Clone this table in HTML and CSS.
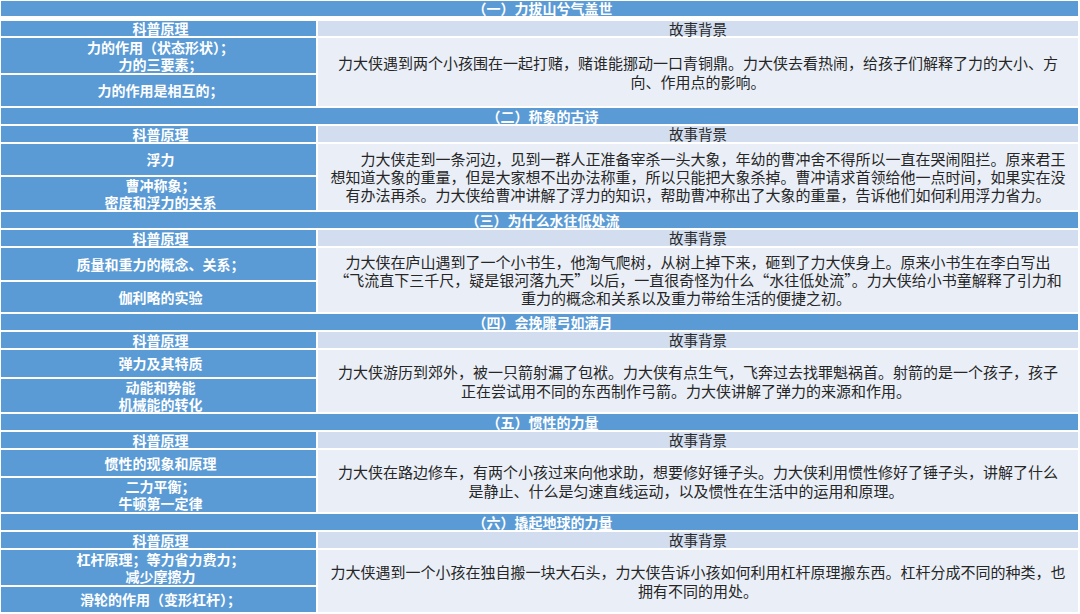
FILE: index.html
```html
<!DOCTYPE html>
<html lang="zh-CN">
<head>
<meta charset="utf-8">
<title>力大侠科普故事</title>
<link rel="stylesheet" href="styles.css">
</head>
<body>
<div class="table">
  <section class="sec s1">
    <div class="title">（一）力拔山兮气盖世</div>
    <div class="hl">科普原理</div>
    <div class="hr">故事背景</div>
    <div class="lc r1">力的作用（状态形状）；<br>力的三要素；</div>
    <div class="lc r2">力的作用是相互的；</div>
    <div class="story">
      <p>力大侠遇到两个小孩围在一起打赌，赌谁能挪动一口青铜鼎。力大侠去看热闹，给孩子们解释了力的大小、方</p>
      <p>向、作用点的影响。</p>
    </div>
  </section>
  <section class="sec s2">
    <div class="title">（二）称象的古诗</div>
    <div class="hl">科普原理</div>
    <div class="hr">故事背景</div>
    <div class="lc r1">浮力</div>
    <div class="lc r2">曹冲称象；<br>密度和浮力的关系</div>
    <div class="story tight">
      <p>　　力大侠走到一条河边，见到一群人正准备宰杀一头大象，年幼的曹冲舍不得所以一直在哭闹阻拦。原来君王</p>
      <p>想知道大象的重量，但是大家想不出办法称重，所以只能把大象杀掉。曹冲请求首领给他一点时间，如果实在没</p>
      <p>有办法再杀。力大侠给曹冲讲解了浮力的知识，帮助曹冲称出了大象的重量，告诉他们如何利用浮力省力。</p>
    </div>
  </section>
  <section class="sec s3">
    <div class="title">（三）为什么水往低处流</div>
    <div class="hl">科普原理</div>
    <div class="hr">故事背景</div>
    <div class="lc r1">质量和重力的概念、关系；</div>
    <div class="lc r2">伽利略的实验</div>
    <div class="story tight">
      <p>力大侠在庐山遇到了一个小书生，他淘气爬树，从树上掉下来，砸到了力大侠身上。原来小书生在李白写出</p>
      <p><span class="q">“</span>飞流直下三千尺，疑是银河落九天<span class="q">”</span>以后，一直很奇怪为什么<span class="q">“</span>水往低处流<span class="q">”</span>。力大侠给小书童解释了引力和</p>
      <p class="shift">重力的概念和关系以及重力带给生活的便捷之初。</p>
    </div>
  </section>
  <section class="sec s4">
    <div class="title">（四）会挽雕弓如满月</div>
    <div class="hl">科普原理</div>
    <div class="hr">故事背景</div>
    <div class="lc r1">弹力及其特质</div>
    <div class="lc r2">动能和势能<br>机械能的转化</div>
    <div class="story">
      <p>力大侠游历到郊外，被一只箭射漏了包袱。力大侠有点生气，飞奔过去找罪魁祸首。射箭的是一个孩子，孩子</p>
      <p class="shift">正在尝试用不同的东西制作弓箭。力大侠讲解了弹力的来源和作用。</p>
    </div>
  </section>
  <section class="sec s5">
    <div class="title">（五）惯性的力量</div>
    <div class="hl">科普原理</div>
    <div class="hr">故事背景</div>
    <div class="lc r1">惯性的现象和原理</div>
    <div class="lc r2">二力平衡；<br>牛顿第一定律</div>
    <div class="story">
      <p>力大侠在路边修车，有两个小孩过来向他求助，想要修好锤子头。力大侠利用惯性修好了锤子头，讲解了什么</p>
      <p class="shift">是静止、什么是匀速直线运动，以及惯性在生活中的运用和原理。</p>
    </div>
  </section>
  <section class="sec s6">
    <div class="title">（六）撬起地球的力量</div>
    <div class="hl">科普原理</div>
    <div class="hr">故事背景</div>
    <div class="lc r1">杠杆原理；等力省力费力；<br>减少摩擦力</div>
    <div class="lc r2">滑轮的作用（变形杠杆）；</div>
    <div class="story">
      <p>力大侠遇到一个小孩在独自搬一块大石头，力大侠告诉小孩如何利用杠杆原理搬东西。杠杆分成不同的种类，也</p>
      <p>拥有不同的用处。</p>
    </div>
  </section>
</div>
</body>
</html>
```

FILE: styles.css
```css
html, body {
  margin: 0;
  padding: 0;
  background: #ffffff;
}

body {
  font-family: "Noto Sans CJK SC", "Noto Sans", sans-serif;
  width: 1080px;
  height: 614px;
  overflow: hidden;
}

.table {
  display: flex;
  flex-direction: column;
  gap: 2px;
  padding: 1px 0 0 1px;
  width: 1077px;
}

.sec {
  display: grid;
  grid-template-columns: 315px 760px;
  column-gap: 2px;
  row-gap: 2px;
}

.s1 { grid-template-rows: 18px 15px 35px 31px; }
.s2 { grid-template-rows: 16px 16px 31px 33px; }
.s3 { grid-template-rows: 16px 16px 32px 30px; }
.s4 { grid-template-rows: 16px 16px 27px 33px; }
.s5 { grid-template-rows: 16px 16px 26px 34px; }
.s6 { grid-template-rows: 16px 16px 35px 25px; }

.title {
  grid-column: 1 / -1;
  grid-row: 1;
  background: #5b9bd5;
  color: #ffffff;
  font-weight: 700;
  font-size: 14px;
  line-height: 16px;
  text-align: center;
  white-space: nowrap;
  padding-left: 6px;
}

.s1 .title {
  margin-bottom: 3px;
  line-height: 15px;
}

.hl, .lc {
  grid-column: 1;
  background: #5b9bd5;
  color: #ffffff;
  font-weight: 700;
  font-size: 14px;
  text-align: center;
  white-space: nowrap;
  padding-left: 4px;
}

.hl {
  grid-row: 2;
  line-height: 16px;
}

.s1 .hl, .s1 .hr {
  line-height: 15px;
}

.hr {
  grid-column: 2;
  grid-row: 2;
  background: #d2deef;
  color: #2a2a2a;
  font-size: 14.5px;
  line-height: 16px;
  text-align: center;
  white-space: nowrap;
}

.lc {
  display: flex;
  flex-direction: column;
  justify-content: center;
  line-height: 17px;
}

.lc.r1 { grid-row: 3; }
.lc.r2 { grid-row: 4; }

.story {
  grid-column: 2;
  grid-row: 3 / span 2;
  background: #eaeff7;
  color: #262626;
  font-size: 15px;
  line-height: 19px;
  display: flex;
  flex-direction: column;
  justify-content: center;
  align-items: center;
  white-space: nowrap;
}

.story.tight {
  line-height: 18px;
}

.story p {
  margin: 0;
  text-align: center;
}

.story p.shift {
  margin-right: 24px;
}

.q {
  font-feature-settings: "fwid" 1;
}
```
